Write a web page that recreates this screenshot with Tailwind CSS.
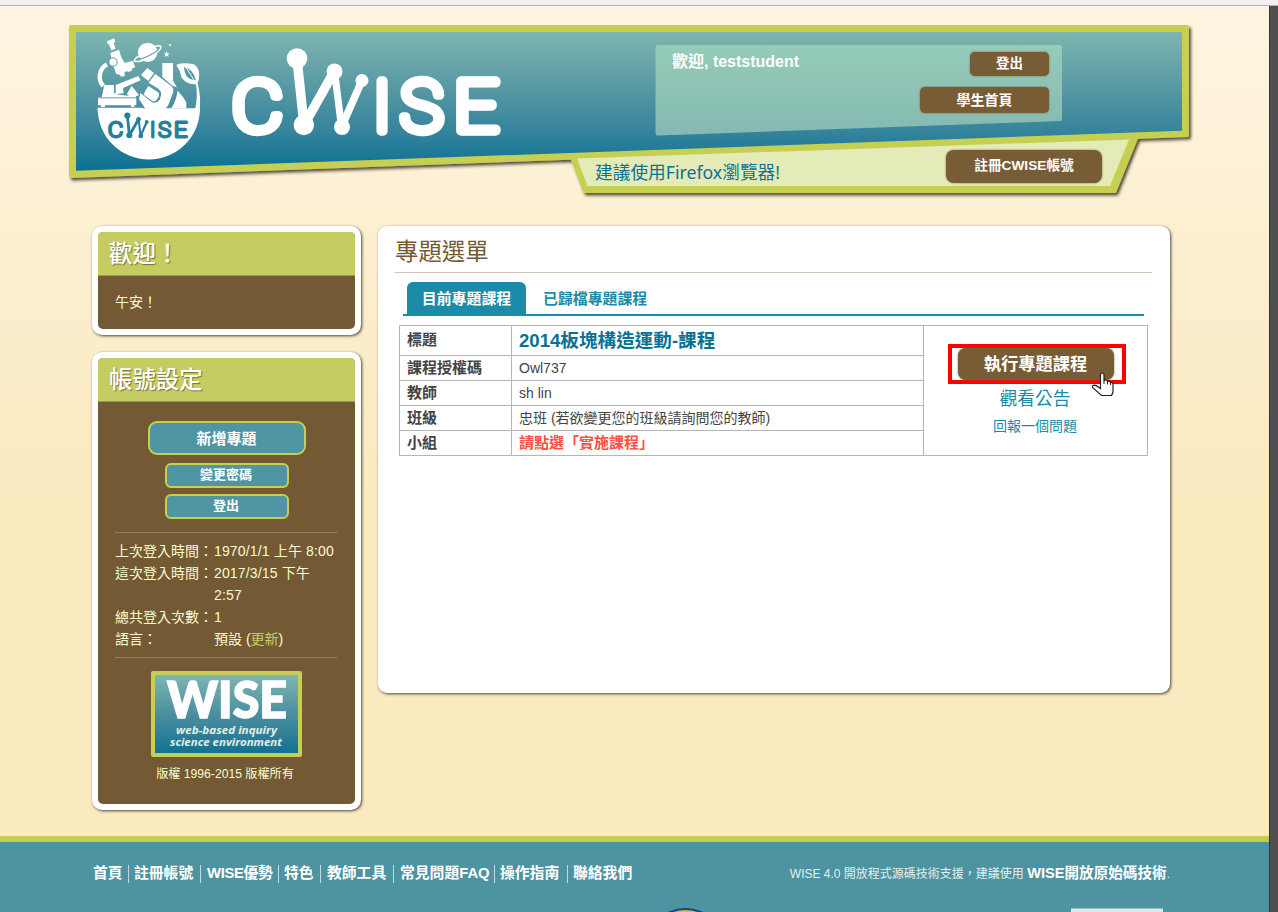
<!DOCTYPE html>
<html lang="zh-Hant">
<head>
<meta charset="utf-8">
<title>CWISE</title>
<script src="https://cdn.jsdelivr.net/npm/@tailwindcss/browser@4"></script>
</head>
<body class="w-[1278px] h-[912px] overflow-hidden flex flex-col bg-[#505050] text-[14px] whitespace-nowrap font-['Liberation_Sans','Noto_Sans_CJK_TC',sans-serif]">
<div class="h-[6px] shrink-0 bg-[#f1f1f1] border-b border-[#aeb0b4]"></div>
<div class="w-[1270px] h-[906px] flex flex-col border-r border-[#353535] bg-linear-to-b from-[#fef4e0] from-0% via-[#faeac0] via-55% to-[#faeac0]">

<header class="relative h-[220px] shrink-0">
  <svg class="absolute inset-0" width="1269" height="220" viewBox="0 6 1269 220">
    <defs>
      <linearGradient id="sea" gradientUnits="userSpaceOnUse" x1="0" y1="32" x2="0" y2="170">
        <stop offset="0" stop-color="#7eb6b0"/><stop offset=".45" stop-color="#5295a2"/><stop offset=".7" stop-color="#38859d"/><stop offset="1" stop-color="#0b7194"/>
      </linearGradient>
      <linearGradient id="mint" x1="0" y1="0" x2="0" y2="1"><stop offset="0" stop-color="#95cbb8"/><stop offset="1" stop-color="#85b9b2"/></linearGradient>
      <filter id="sh" x="-5%" y="-10%" width="110%" height="130%"><feDropShadow dx="2" dy="2.5" stdDeviation="1.6" flood-color="#2b2418" flood-opacity=".8"/></filter>
      <g id="wordmark">
        <g font-family="Roboto" font-weight="100" font-size="69.500" text-anchor="middle" fill="currentColor" stroke="currentColor" stroke-width="9.300" stroke-linejoin="round">
          <text transform="translate(257.500 131.200) scale(1.13 1)">C</text><text x="382" y="131.200">I</text><text transform="translate(421.500 131.200) scale(1.04 1)">S</text><text transform="translate(476 131.200) scale(1.13 1)">E</text>
        </g>
        <g stroke="currentColor" fill="currentColor">
          <path d="M297 59L304 125" stroke-width="9.5"/><path d="M304 125L334.5 71" stroke-width="9.5"/>
          <path d="M334.5 71L341.5 127" stroke-width="7"/><path d="M341.5 127L362 80.5" stroke-width="7.5"/>
          <g stroke="none"><circle cx="297" cy="58.5" r="10.3"/><circle cx="303.8" cy="125" r="10.2"/><circle cx="334.5" cy="71.5" r="8"/><circle cx="342" cy="127" r="8"/><circle cx="362" cy="80.5" r="6.5"/></g>
        </g>
      </g>
    </defs>
    <g filter="url(#sh)" fill="#c5d052" stroke="#c5d052" stroke-width="3" stroke-linejoin="round">
      <path d="M569 150L584.5 191.5H1115L1137 137V130Z"/>
      <path d="M70.500 26.500H1187.500V135.500L70.500 176.500Z"/>
    </g>
    <path d="M577 158.500L587.500 186H1110L1129 139.500Z" fill="#e4ebb8"/>
    <path d="M76 32H1182V130.800L76 170.800Z" fill="url(#sea)"/>
    <path d="M658 46H1059.500Q1061 46 1061 47.500V119Q1061 120 1060 120.100L658 134.500Q656.500 134.500 656.500 133V47.500Q656.500 46 658 46Z" fill="url(#mint)" stroke="url(#mint)" stroke-width="2"/>
    <use href="#wordmark" class="text-white"/>
    <!-- science emblem -->
    <g transform="translate(85 30) scale(.33333)" fill="#fff">
      <path d="M38 235H345A153.500 153.500 0 0 1 38 235Z"/>
      <path d="M66 34L88 25L91 35L86 39L92 56L79 61L72 43L68 43Z"/>
      <path d="M76 69L102 59L109 82L119 99L143 92L151 112L142 115L140 122L130 126L126 123L118 128L120 137L109 140L104 134L94 132L84 106Z"/>
      <circle cx="84" cy="96" r="12.500" stroke="#5a9ba4" stroke-width="3"/>
      <path d="M66 103A42 42 0 0 0 55 168" fill="none" stroke="#fff" stroke-width="13"/>
      <path d="M58 165H87V190H92V165L160 138L167 151L114 174L116 190L92 193L127 197L142 191L154 201V226H148V231H138V226H60V231H48V226H39V202H50Z"/>
      <path d="M39 203.500H156" stroke="#438b9f" stroke-width="2.500"/>
      <path d="M38 233.500H170L180 240H38Z"/>
      <path d="M125 193L140 168L162 195L150 200Z"/>
      <path d="M168 135L187 114L207 129L190 153Z"/>
      <path d="M191 158L211 132L256 166Q270 176 263 191L250 225L242 236H181L162 207L166 189L201 217Q213 222 224 209L229 192Q230 184 220 176Z"/>
      <path d="M181 182L190 168L218 186Q225 190 220 202L214 211Q207 217 201 212L176 194Z"/>
      <path d="M232 99H264V152L276 172L262 167L232 141Z"/>
      <path d="M278 182L294 201L304 217V235H256L269 207Z"/>
      <path d="M271 178Q281 190 258 233" fill="none" stroke="#438b9f" stroke-width="4"/>
      <path d="M279 103Q294 97 327 103Q348 117 341 151L335 162Q308 166 290 143Q286 121 274 105Z"/>
      <path d="M297 112Q323 115 333 151Q310 149 303 135Q297 123 297 112Z" fill="#5498a3"/>
      <path d="M302 111L331 156" fill="none" stroke="#fff" stroke-width="3"/>
      <path d="M332 157Q340 198 330 239L343 246Q350 205 337 156Z"/>
      <circle cx="188" cy="67" r="29"/>
      <path d="M163 78Q145 88 148 93Q164 100 202 76Q231 58 228 50Q224 44 209 50" fill="none" stroke="#fff" stroke-width="4.500"/>
      <path d="M158 88Q181 87 220 60" fill="none" stroke="#70aaac" stroke-width="3.500"/>
      <path d="M245 63L247.500 70H254L249 74L251 81L245 77L239 81L241 74L236 70H243Z"/>
      <path d="M255 40L256.500 43.500L260 45L256.500 46.500L255 50L253.500 46.500L250 45L253.500 43.500Z"/>
    </g>
    <use href="#wordmark" class="text-[#27809a]" transform="translate(38.700 98) scale(.2985)"/>
  </svg>
  <div class="relative ml-[672px] w-[377px] h-[138px] pt-[46px] flex justify-between">
    <p class="text-white font-bold text-[16px] leading-[20px]">歡迎, teststudent</p>
    <div class="flex flex-col items-end gap-[11px] text-white font-bold">
      <a class="w-[79px] h-[24px] rounded-[5px] bg-[#785c35] shadow-[0_0_2px_#785c35] text-[13.500px] leading-[23px] text-center">登出</a>
      <a class="w-[129px] h-[26px] rounded-[5px] bg-[#785c35] shadow-[0_0_2px_#785c35] text-[14px] leading-[26px] text-center">學生首頁</a>
    </div>
  </div>
  <div class="relative ml-[595px] w-[507px] pt-[6px] flex justify-between">
    <p class="pt-[10px] text-[17.700px] leading-[24px] text-[#0b7194] font-['Noto_Sans','Noto_Sans_CJK_TC',sans-serif]">建議使用Firefox瀏覽器!</p>
    <a class="w-[156px] h-[33px] rounded-[8px] bg-[#785c35] shadow-[0_0_2px_#785c35] text-white font-bold text-[13.700px] leading-[32px] text-center">註冊CWISE帳號</a>
  </div>
</header>

<main class="flex h-[610px] shrink-0 pl-[92px] gap-[17px]">
  <aside class="w-[269px] flex flex-col gap-[17px]">
    <section class="h-[109px] rounded-[10px] border-[6px] border-white bg-white shadow-[1px_1px_3px_#4b4435]">
      <div class="h-full rounded-[5px] overflow-hidden bg-[#735a35]">
        <h2 class="h-[44px] bg-[#c5cd62] border-b border-[#96977a] pl-[11px] text-white text-[23.400px] leading-[44px] font-medium [text-shadow:1px_1px_1px_#71743a]">歡迎！</h2>
        <p class="pl-[17px] pt-[15px] leading-[22px] text-[#fdfbcf]">午安！</p>
      </div>
    </section>
    <section class="h-[458px] rounded-[10px] border-[6px] border-white bg-white shadow-[1px_1px_3px_#4b4435]">
      <div class="h-full rounded-[5px] overflow-hidden bg-[#735a35] text-[#fdfbcf]">
        <h2 class="h-[44px] bg-[#c5cd62] border-b border-[#96977a] pl-[11px] text-white text-[23.400px] leading-[44px] font-medium [text-shadow:1px_1px_1px_#71743a]">帳號設定</h2>
        <div class="mx-[17px] w-[222px] pl-[2px] pt-[19px] h-[131px] flex flex-col items-center border-b border-[#94805e] text-white font-bold text-center">
          <a class="w-[158px] h-[34px] pr-px rounded-[9px] border-2 border-[#c5d052] bg-[#4f95a4] text-[15px] leading-[31px]">新增專題</a>
          <a class="mt-[8px] w-[124px] h-[25px] pr-[2px] rounded-[6px] border-2 border-[#c5d052] bg-[#4f95a4] text-[13px] leading-[20px]">變更密碼</a>
          <a class="mt-[6px] w-[124px] h-[25px] pr-[2px] rounded-[6px] border-2 border-[#c5d052] bg-[#4f95a4] text-[13px] leading-[20px]">登出</a>
        </div>
        <dl class="mx-[17px] w-[222px] pt-[7px] h-[125px] grid grid-cols-[99px_1fr] content-start leading-[22px] border-b border-[#94805e]">
          <dt>上次登入時間：</dt><dd class="tracking-[0.150px]">1970/1/1 上午 8:00</dd>
          <dt>這次登入時間：</dt><dd class="tracking-[0.150px]">2017/3/15 下午<br>2:57</dd>
          <dt>總共登入次數：</dt><dd>1</dd>
          <dt>語言：</dt><dd>預設 (<a class="text-[#c5cd62]">更新</a>)</dd>
        </dl>
        <div class="mt-[13px] ml-[53px] w-[151px] h-[86px] rounded-[2px] border-4 border-[#c5d052] bg-linear-to-b from-[#7eb6b0] via-[#4b8fa0] to-[#0b7194] text-white">
          <svg class="overflow-visible" width="143" height="78" viewBox="0 0 143 78" fill="#fff">
            <text x="12" y="42.500" font-family="Lato" font-weight="900" font-size="51" textLength="120" lengthAdjust="spacingAndGlyphs" stroke="#fff" stroke-width="1.600">WISE</text>
            <g font-family="Open Sans" font-weight="700" font-style="italic" font-size="10.800" fill="#e0f0e4">
              <text x="21" y="59" textLength="101" lengthAdjust="spacingAndGlyphs">web-based inquiry</text>
              <text x="15" y="70.500" textLength="112" lengthAdjust="spacingAndGlyphs">science environment</text>
            </g>
          </svg>
        </div>
        <p class="pt-[7px] pr-[3px] text-center text-[12.150px] leading-[20px]">版權 1996-2015 版權所有</p>
      </div>
    </section>
  </aside>

  <section class="w-[792px] h-[467px] rounded-[9px] bg-white shadow-[1px_1px_3px_#4b4435] px-[17px]">
    <h1 class="w-[757px] h-[47px] border-b border-[#d3c6b3] text-[23.400px] leading-[52px] text-[#735a35]">專題選單</h1>
    <nav class="ml-[8px] w-[741px] mt-[9px] h-[34px] flex border-b-2 border-[#1c8ba8] pl-[4px] font-bold text-[14.900px] leading-[35px]">
      <a class="w-[119px] text-center rounded-t-[6px] bg-[#1c8ba8] text-white">目前專題課程</a>
      <a class="pl-[17px] text-[#1c8ba8]">已歸檔專題課程</a>
    </nav>
    <div class="mt-[9px] ml-[4px] w-[749px] flex border border-[#b5b5b5] text-[#444]">
      <div class="w-[523px] grid grid-cols-[112px_1fr] grid-rows-[30px_25px_25px_25px_24px] leading-[24px]">
        <div class="pl-[7px] border-r border-b border-[#b5b5b5] font-bold text-[15px] leading-[28px]">標題</div><div class="pl-[7px] border-b border-[#b5b5b5] font-bold text-[18.600px] leading-[30px] text-[#0b7194]">2014板塊構造運動-課程</div>
        <div class="pl-[7px] border-r border-b border-[#b5b5b5] font-bold text-[15px]">課程授權碼</div><div class="pl-[7px] border-b border-[#b5b5b5]">Owl737</div>
        <div class="pl-[7px] border-r border-b border-[#b5b5b5] font-bold text-[15px]">教師</div><div class="pl-[7px] border-b border-[#b5b5b5]">sh lin</div>
        <div class="pl-[7px] border-r border-b border-[#b5b5b5] font-bold text-[15px]">班級</div><div class="pl-[7px] border-b border-[#b5b5b5]">忠班 (若欲變更您的班級請詢問您的教師)</div>
        <div class="pl-[7px] border-r border-[#b5b5b5] font-bold text-[15px]">小組</div><div class="pl-[7px] font-bold text-[15px] text-[#ff5043]">請點選「實施課程」</div>
      </div>
      <div class="flex-1 border-l border-[#b5b5b5] pt-[18px] pr-px flex flex-col items-center text-[#1c8ba8]">
        <div class="relative ml-[3px] w-[178px] h-[40px] border-4 border-[#f00] flex justify-center">
          <a class="w-[156px] h-[32px] mr-[2px] rounded-[8px] bg-[#785c35] shadow-[0_0_2px_#785c35] text-white font-bold text-[17.300px] leading-[32px] text-center">執行專題課程</a>
          <svg class="absolute left-[139px] top-[24px]" width="23" height="25" viewBox="0 0 23 25"><path d="M9.500 15V3Q9.500 1 11.200 1Q13 1 13 3V8.500Q15.500 7 16.500 9.500Q19 8.500 19.500 10.500Q22 10 22 12.500V20Q21.500 21.500 20.500 23.500H10.500L1.500 15.500Q.8 13.500 3.500 13.200Q5.500 13.500 9.500 16.500Z" fill="#fff" stroke="#222" stroke-width="1.200"/><path d="M13 8.500V12M16.500 9.500V12.500M19.500 10.500V13" stroke="#222" stroke-width="1"/></svg>
        </div>
        <a class="mt-[2px] text-[17.700px] leading-[26px]">觀看公告</a>
        <a class="mt-[1px] text-[14px] leading-[26px]">回報一個問題</a>
      </div>
    </div>
  </section>
</main>

<footer class="h-[76px] shrink-0 border-t-[6px] border-[#c5cd52] bg-[#4e93a1] flex flex-col justify-between overflow-hidden">
  <div class="flex justify-between pl-[93px] pr-[99px] pt-[23px] text-white">
    <nav class="flex font-bold text-[14.800px] leading-[17px]">
      <a class="w-[36px] border-r border-[#c3dadd]">首頁</a>
      <a class="w-[72px] pl-[5px] border-r border-[#c3dadd]">註冊帳號</a>
      <a class="w-[78px] pl-[6px] border-r border-[#c3dadd] tracking-[-0.300px]">WISE優勢</a>
      <a class="w-[42px] pl-[5px] border-r border-[#c3dadd]">特色</a>
      <a class="w-[73px] pl-[6px] border-r border-[#c3dadd]">教師工具</a>
      <a class="w-[101px] pl-[6px] border-r border-[#c3dadd]">常見問題FAQ</a>
      <a class="w-[73px] pl-[5px] border-r border-[#c3dadd]">操作指南</a>
      <a class="pl-[5px]">聯絡我們</a>
    </nav>
    <p class="text-[12px] leading-[17px] text-[#e0f2ee]">WISE 4.0 開放程式源碼技術支援，建議使用 <b class="text-[14.600px] leading-[17px] text-white">WISE開放原始碼技術</b>.</p>
  </div>
  <svg class="ml-[650px]" width="520" height="5" viewBox="650 907 520 5"><circle cx="685.500" cy="948" r="40" fill="#0d4a78"/><circle cx="685.500" cy="948" r="38" fill="#d9b65c"/><path d="M1071 908.500H1163V912H1071Z" fill="#dde8ea"/></svg>
</footer>
</div>
</body>
</html>
